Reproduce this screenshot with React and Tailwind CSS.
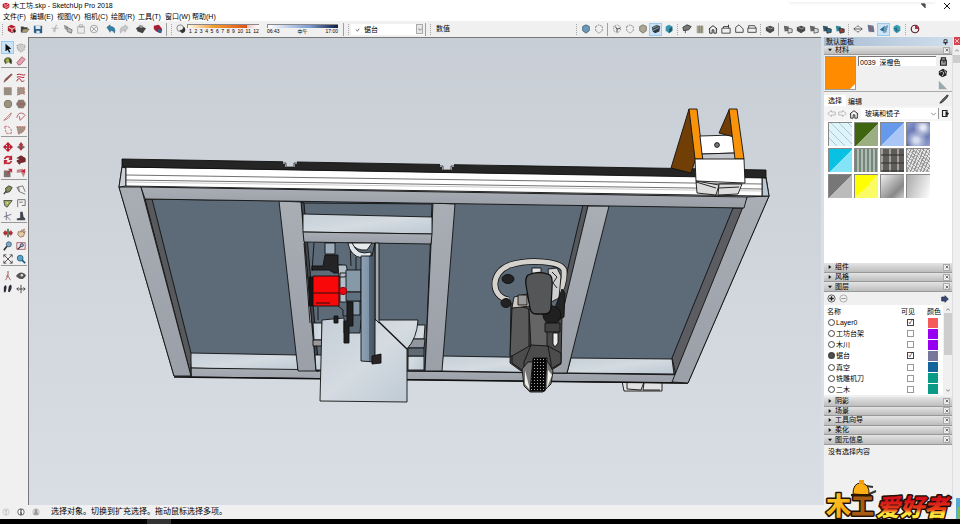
import React from "react";

const INK = "#333333";

/* Small 12x12 tool glyphs, keyed by tool name */
const GLYPHS = {
  logo: <><path d="M1 3l5-2 5 2v5l-4 3-6-3z" fill="#c81e2c" /><path d="M3 4l3 1 3-2M4 7l3 1 3-2" stroke="#fff" fill="none" /></>,
  fresh: <><path d="M1 3l4-2 5 2v6l-4 2-5-3z" fill="#b0202c" /><path d="M2 4l4 2 4-2M6 6v4" stroke="#fff" fill="none" /><path d="M8 7l3 1-2 3z" fill="#222" /></>,
  open: <><path d="M1 3h3l1 1h4v2H4L2 10H1z" fill="#444" /><path d="M4 6h7l-3 4H2z" fill="#b3a07a" stroke="#444" strokeWidth=".7" /></>,
  save: <><path d="M1 2h10v9H2L1 10z" fill="#2d5f85" /><path d="M3 2h6v4H3zM4 8h4v3H4z" fill="#dce8f2" /></>,
  cut: <path d="M8 1L4 9M2 5h8M6 5v5" stroke="#b5b5b5" fill="none" strokeWidth="1.3" />,
  copy: <><path d="M1 1l5 2v5L2 6z" fill="#999" /><path d="M5 4l6 3-1 4-5-2z" fill="#bbb" stroke="#777" /></>,
  paste: <path d="M2 3h8v8H2zM4 1h4v3H4z" fill="#eee" stroke="#aaa" />,
  cancel: <><circle cx="6" cy="6" r="4.5" fill="none" stroke="#999" /><path d="M3 3l6 6M9 3l-6 6" stroke="#999" /></>,
  undo: <path d="M1 4l4-3v2c5 0 7 3 5 8-1-3-3-3-5-3v2z" fill="#2d7fa8" stroke="#24536c" strokeWidth=".5" />,
  redo: <path d="M11 4L7 1v2c-5 0-7 3-5 8 1-3 3-3 5-3v2z" fill="#c5c9cc" stroke="#999" strokeWidth=".5" />,
  print: <><path d="M0 5l5-3 7 3-4 6-6-2z" fill="#444" /><path d="M4 1l5 1-2 3-3-1z" fill="#999" /></>,
  model: <><path d="M1 2l6-1 4 5-2 5-5-2-3-3z" fill="#a51c35" /><path d="M6 6l5 1-1 4-4-1z" fill="#35618c" /></>,
  shadow: <><circle cx="5" cy="5" r="4" fill="#eee" stroke="#777" /><path d="M4 7c3 1 5-1 5-4 4 3 2 8-2 8z" fill="#333" /></>,
  blueball: <path d="M2 3l4-2 4 2v5l-4 3-4-3z" fill="#6d98b5" stroke="#40657d" />,
  wire: <path d="M2 3l4-2 4 2v5l-4 3-4-3z" fill="none" stroke="#777" strokeDasharray="2 1" />,
  hidden: <><path d="M2 3l4-2 4 2v5l-4 3-4-3z" fill="#eee" stroke="#777" strokeDasharray="1 1" /><path d="M4 3l2 3v4M6 6l4-1" stroke="#333" fill="none" /></>,
  shaded: <path d="M2 3l4-2 4 2v5l-4 3-4-3z" fill="#aaa795" stroke="#777564" />,
  texture: <><path d="M1 4l6-3 4 2-1 6-5 2-3-2z" fill="#2e3a42" /><path d="M2 5l6-3M2 8l8-4" stroke="#a9bdc9" /></>,
  mono: <><path d="M2 3l4-2 4 2v5l-4 3-4-3z" fill="#3896b0" /><path d="M6 6l4-3v5l-4 3z" fill="#255b70" /></>,
  iso: <><path d="M1 4l5-3 5 2-3 4-6 1z" fill="#777" stroke="#333" /><path d="M4 7v4" stroke="#444" /></>,
  topview: <><path d="M2 2h8v9H2z" fill="#a6a690" /><path d="M5 2v9M8 2v9" stroke="#777" /></>,
  home: <path d="M1 6l5-4 5 4M2 5v6h3V7h2v4h3V5" fill="none" stroke="#333" strokeWidth="1.2" />,
  right: <path d="M1 5h10v6H1zM3 5V3h6V1M9 1v4" fill="none" stroke="#333" />,
  back: <path d="M2 10V4l4-3 5 5v4z" fill="none" stroke="#333" />,
  left: <path d="M1 5h10v5H1zM2 5V2h7l2 3" fill="none" stroke="#333" />,
  solid: <><path d="M1 4l5-2 5 2v4l-5 3-5-3z" fill="#4b4b4b" /><path d="M3 4l4 2 3-2" stroke="#aaa" fill="none" /></>,
  solidLight: <><path d="M1 2l6 1v5l-5 1z" fill="#666" /><path d="M6 5l5 1v4l-5 1z" fill="#ddd" stroke="#555" /></>,
  solidBlue: <><path d="M1 2l6 1v5l-5 1z" fill="#315a6b" /><path d="M5 5l6 1v4l-5 1z" fill="#276f91" stroke="#333" /></>,
  solidRed: <><path d="M1 2l6 1v5l-5 1z" fill="#2f8396" /><path d="M5 5l6 1v4l-5 1z" fill="#903e3e" stroke="#333" /></>,
  section: <path d="M1 6h10M3 4L1 6l2 2M9 4l2 2-2 2M4 4l2-2 2 2M4 8l2 2 2-2" fill="none" stroke="#444" />,
  secPlane: <><path d="M2 1l7 1 1 8-7-1z" fill="#58779b" /><path d="M3 4l7 3M5 2v8" stroke="#a15b65" /></>,
  secCut: <><path d="M1 7l6-5v8z" fill="#24689a" /><path d="M6 4l5-3-2 9-4 1z" fill="#729ab9" /></>,
  secFill: <><path d="M2 3l4-2 4 2v5l-4 3-4-3z" fill="#36a0b7" /><path d="M5 4v6M2 5l6 3" stroke="#275967" /></>,
  clock: <><circle cx="6" cy="6" r="4.5" fill="#eee" stroke="#5c1e29" strokeWidth="1.4" /><path d="M6 6V2a4 4 0 014 4z" fill="#bd2740" /></>,
  select: <path d="M3 1l7 6-3 .5L9 11l-2 .5L6 8l-3 2z" fill="#101010" />,
  component: <path d="M1 3l5-2 5 2-1 5-4 3-4-3z" fill="#ccc" stroke="#999" strokeDasharray="2 1" />,
  paint: <><path d="M1 6c1-6 9-6 10 0l-1 4-4-3-3 3z" fill="#55673d" /><path d="M3 5l3-3 2 4-3 3z" fill="#a8ac48" /><path d="M8 4l2 5" stroke="#222" /></>,
  eraser: <path d="M1 8l6-7 4 3-5 6-3 1z" fill="#e8a0b0" stroke="#a66577" />,
  pencil: <path d="M1 11l2-4 7-6 1 1-7 7z" fill="#98584d" stroke="#6d342c" strokeWidth=".6" />,
  freehand: <path d="M1 2c4-2 8 2 10 0M1 5c4-2 7 2 9 0M1 10c1-5 5-3 5-1s3 1 4 0" fill="none" stroke="#b32737" strokeWidth="1.2" />,
  square: <><path d="M1 2h9v9H1z" fill="#948f80" /><path d="M1 2h9v9" fill="none" stroke="#bc8b84" /></>,
  rotrect: <path d="M2 2h8v8l-3-1-5 2z" fill="#a39385" stroke="#b05b56" strokeDasharray="2 1" />,
  circle: <circle cx="6" cy="6" r="4.5" fill="#9b947f" stroke="#756b58" />,
  polygon: <><path d="M3 1h6l3 5-3 5H3L0 6z" fill="#8b7c6f" /><path d="M3 6h6" stroke="#b44" /></>,
  arc: <path d="M1 10C5 9 9 6 10 1M1 10L10 1" fill="none" stroke="#b86b68" />,
  arc2: <path d="M1 7C2 0 8 0 11 4L5 10 4 5" fill="none" stroke="#b14755" />,
  arc3: <path d="M2 2c5-2 9 3 8 8M2 2l2 8h6" fill="none" stroke="#bc5d65" strokeDasharray="3 1" />,
  pie: <path d="M1 2h10c0 5-3 7-8 9z" fill="#a59388" stroke="#b65d5d" strokeDasharray="2 1" />,
  move: <path d="M6 0l3 3-2 2V4v1h1l1-2 3 3-3 3-1-2H7v1l2 1-3 3-3-3 2-1V7H4L3 9 0 6l3-3 1 2h1V4L3 3z" fill="#bc1d32" />,
  pushpull: <><path d="M1 6l5-3 5 3-5 4z" fill="#776b67" /><path d="M6 0l3 4H7v6H5V4H3z" fill="#b72c3b" /></>,
  rotate: <path d="M2 5c1-4 6-4 8-1M10 7c-1 4-6 4-8 1M10 1v4H7M2 11V7h3" fill="none" stroke="#c22638" strokeWidth="2" />,
  follow: <path d="M1 4l5-3 5 3v4l-5 1-2 2-3-4 4-2 4 1" fill="#8a252e" stroke="#4b2828" />,
  scale: <><path d="M1 3h8v8H1z" fill="#80706c" /><path d="M6 1h5v5L9 4 6 7 5 6l3-3z" fill="#c7273c" /></>,
  offset: <><path d="M1 2l7-1 3 5-2 5-3-6-5 1z" fill="#c2868a" /><path d="M6 4l5-3v5z" fill="#c92538" /></>,
  tape: <><path d="M1 11l3-4" stroke="#333" strokeWidth="1.5" /><path d="M3 4l4-3 4 2-3 5-4 1z" fill="#89905c" stroke="#333" /></>,
  dimension: <path d="M1 3l7-2 3 7M3 2l1 6 7 3M1 3l3 5" fill="none" stroke="#666" />,
  protractor: <><path d="M1 3h10L5 11l-3-2z" fill="#a4ae57" stroke="#444" /><circle cx="5" cy="6" r="1" fill="#eee" /></>,
  text: <path d="M2 11V2h9v7H7M4 5h4" fill="none" stroke="#777" strokeWidth="1.2" />,
  axes: <path d="M4 1v10M1 7l9-3M4 6l5 5" fill="none" stroke="#667" />,
  text3d: <path d="M5 1h3l1 6 2 2v2H1V9l4-1z" fill="#414850" />,
  orbit: <><path d="M0 6l3-4v2h2v4H3v2zM12 6L9 2v2H7v4h2v2z" fill="#b32a34" /><path d="M6 1v10" stroke="#3c7551" strokeWidth="2" /></>,
  hand: <path d="M2 8l1-4 2 1 2-3v3l3-4-1 5 2-2-2 6-4 1z" fill="#e3c9a7" stroke="#977457" />,
  zoom: <><path d="M1 11l4-5" stroke="#333" strokeWidth="2" /><circle cx="7" cy="4" r="3" fill="#82aac8" stroke="#345c7a" /></>,
  zoomwin: <><path d="M1 2h10v8H1z" fill="none" stroke="#a24854" /><path d="M2 10l4-4" stroke="#333" strokeWidth="1.5" /><circle cx="7" cy="5" r="2" fill="#9ac" stroke="#446" /></>,
  extents: <path d="M1 1l10 10M11 1L1 11M1 4V1h3M8 11h3V8M8 1h3v3M4 11H1V8" fill="none" stroke="#615555" strokeWidth="1.2" />,
  prev: <><circle cx="5" cy="5" r="3.5" fill="#5ba3ca" stroke="#29617f" /><path d="M7 7l4 4" stroke="#24577c" strokeWidth="2" /></>,
  person: <path d="M6 1v5l-3 5M6 6l3 5M6 4L4 7M5 1h2" fill="none" stroke="#955" />,
  eye: <><path d="M0 6c3-5 8-6 12-1-3 6-8 6-12 1" fill="#555" /><circle cx="7" cy="5" r="1.5" fill="#ddd" /></>,
  feet: <path d="M1 4c2-5 4-2 3 2l-1 4H1zM7 3c3-5 4 0 3 3l-2 4-2-1z" fill="#2b2b35" />,
  compass: <path d="M1 6h10M6 1v10M3 4L1 6l2 2M9 4l2 2-2 2" fill="none" stroke="#333" />,
  lock: <path d="M3 5h7v6H3zM4 5V2h5v3M6 7h2" fill="#999" stroke="#222" strokeWidth="1.3" />,
  globe: <><path d="M1 4l5-3 5 3-1 5-5 2-4-3z" fill="#222" /><path d="M2 5l3-1 2 2-2 4M8 3l2 4" stroke="#ddd" fill="none" /></>,
  corner: <path d="M1 1l10 10H1z" fill="#9aa9ae" />,
  navLeft: <path d="M1 6l5-4v2h5v4H6v2z" fill="#f6f6f6" stroke="#aaa" />,
  navRight: <path d="M11 6L6 2v2H1v4h5v2z" fill="#f6f6f6" stroke="#aaa" />,
  export: <><path d="M2 2h6v8H2z" fill="#eee" stroke="#222" strokeWidth="1.5" /><path d="M6 3l5 3-5 4z" fill="#222" /></>,
  detail: <><path d="M1 3h5V1l5 5-5 5V9H1z" fill="#3a4a78" stroke="#1b2238" /></>,
  picker: <path d="M1 11l2-3 5-5 2-2 1 1-2 3-5 5z" fill="#666" stroke="#222" />,
  plus: <><circle cx="6" cy="6" r="4.8" fill="none" stroke="#333" /><path d="M3 6h6M6 3v6" stroke="#222" strokeWidth="1.8" /></>,
  minus: <><circle cx="6" cy="6" r="4.8" fill="none" stroke="#999" /><path d="M3 6h6" stroke="#999" strokeWidth="1.4" /></>,
  info: <><circle cx="6" cy="6" r="4.8" fill="#fff" stroke="#222" /><path d="M6 5v5M6 2v2" stroke="#111" strokeWidth="1.7" /></>,
  geo: <><circle cx="6" cy="6" r="4.8" fill="#eee" stroke="#bbb" /><path d="M4 4h4M6 3v7" stroke="#aaa" /></>,
  user: <><circle cx="6" cy="6" r="5" fill="#ddd" stroke="#bbb" /><path d="M4 2h4v4l2 4H2l2-4z" fill="#999" /></>,
};

function Glyph({ name, className = "size-[10px]" }) {
  return <svg viewBox="0 0 12 12" aria-hidden="true" className={className}>{GLYPHS[name]}</svg>;
}

function Tool({ name, active }) {
  return (
    <button
      aria-label={name}
      className={active
        ? "flex h-[13px] w-[13px] items-center justify-center border border-[#99c9ef] bg-[#cce4f7]"
        : "flex h-[13px] w-[13px] items-center justify-center"}
    >
      <Glyph name={name} />
    </button>
  );
}

const Tools = ({ names, active }) => (
  <div className="flex">{names.map((n, i) => <Tool key={i} name={n} active={active === n} />)}</div>
);
const Grip = () => <span className="mx-[2px] h-[11px] border-l border-dotted border-[#a5a5a5]" />;
const Bar = () => <span className="mx-[2px] h-[13px] border-l border-[#a0a0a0]" />;

const MENUS = ["文件(F)", "编辑(E)", "视图(V)", "相机(C)", "绘图(R)", "工具(T)", "窗口(W)", "帮助(H)"];

function TitleBar() {
  return (
    <header className="bg-white">
      <div className="flex h-[12px] items-center gap-[2px] pl-[2px]">
        <Glyph name="logo" className="size-[8px]" />
        <h1 className="text-[7px] leading-[10px]">木工坊.skp - SketchUp Pro 2018</h1>
        <div className="mr-[23px] ml-auto h-[2px] w-[146px] self-start bg-white shadow" />
        <div className="-ml-[40px] flex gap-[18px] pr-[10px]">
          <button aria-label="还原"><svg viewBox="0 0 6 6" className="size-[6px]"><path d="M1 1h4v4M2 2h2v2" stroke="#111" fill="none" /></svg></button>
          <button aria-label="关闭"><svg viewBox="0 0 6 6" className="size-[6px]"><path d="M0 0l6 6M6 0L0 6" stroke="#111" fill="none" /></svg></button>
        </div>
      </div>
      <nav className="flex h-[9px] items-center pl-[3px]">
        {MENUS.map((m) => <button key={m} className="w-[27px] text-left text-[7px] leading-[8px] whitespace-nowrap">{m}</button>)}
      </nav>
    </header>
  );
}

function Toolbar() {
  return (
    <div className="flex h-[16px] items-center overflow-hidden bg-[#f0f0f0]">
      <Grip />
      <div className="flex gap-[4px]">
        <Tools names={["fresh", "open", "save"]} />
        <Tools names={["cut", "copy", "paste", "cancel"]} />
        <Tools names={["undo", "redo"]} />
        <Tools names={["print"]} />
        <Tools names={["model"]} />
      </div>
      <Bar /><Grip />
      <Tools names={["shadow"]} />
      <div className="w-[72px] text-[5px] leading-[6px]">
        <div className="h-[4px] border-t border-l border-[#888] bg-linear-to-r from-[#fff8e8] via-[#f0a030] via-35% to-[#d82818]">
          <div className="ml-auto h-full w-[12px] bg-linear-to-r from-[#f0c0c0] to-white" />
        </div>
        <div className="flex justify-between pl-[2px]">{["1", "2", "3", "4", "5", "6", "7", "8", "9", "10", "11", "12"].map((n) => <span key={n}>{n}</span>)}</div>
      </div>
      <div className="ml-[8px] w-[71px] text-[5px] leading-[6px]">
        <div className="h-[4px] border-t border-l border-[#888] bg-linear-to-r from-white via-[#7d9bcf] via-60% to-[#111d44]" />
        <div className="flex justify-between"><span>06:43</span><span>中午</span><span>17:00</span></div>
      </div>
      <span className="ml-[3px]" /><Bar /><Grip />
      <label className="flex h-[11px] w-[72px] items-center bg-white pl-[4px]">
        <svg viewBox="0 0 6 6" className="size-[5px]"><path d="M1 3l2 2 2-3" fill="none" stroke="#555" /></svg>
        <select aria-label="图层" className="ml-[4px] min-w-0 flex-1 appearance-none bg-transparent text-[7px] leading-[9px]"><option>锯台</option></select>
        <span className="flex h-[10px] w-[7px] items-center justify-center border border-[#aaa] bg-[#e7e7e7]"><svg viewBox="0 0 6 6" className="size-[4px]"><path d="M0 2l3 3 3-3" fill="none" stroke="#555" /></svg></span>
      </label>
      <Bar /><Grip />
      <span className="w-[141px] pl-[3px] text-[7px] leading-[10px]">数值</span>
      <Grip />
      <Tools names={["blueball", "wire"]} />
      <Bar />
      <Tools names={["hidden", "wire", "shaded", "texture", "mono"]} active="texture" />
      <Grip />
      <Tools names={["iso", "topview", "home", "right", "back", "left"]} />
      <Grip />
      <Tools names={["solid"]} />
      <Bar />
      <Tools names={["solidLight", "solid", "solidLight", "solidBlue", "solidRed"]} />
      <Grip />
      <Tools names={["section", "secPlane", "secCut", "secFill"]} active="secCut" />
      <Grip />
      <Tools names={["clock"]} />
    </div>
  );
}

const PALETTE = [
  ["select", "component", "paint", "eraser"],
  ["pencil", "freehand", "square", "rotrect", "circle", "polygon", "arc", "arc2", "arc3", "pie"],
  ["move", "pushpull", "rotate", "follow", "scale", "offset"],
  ["tape", "dimension", "protractor", "text", "axes", "text3d"],
  ["orbit", "hand", "zoom", "zoomwin", "extents", "prev"],
  ["person", "eye", "feet", "compass"],
];

function Palette() {
  return (
    <aside className="w-[28px] shrink-0 bg-[#f0f0f0] pl-[1px]">
      {PALETTE.map((group, i) => (
        <div key={i} className={i ? "grid w-[26px] grid-cols-2 border-t border-[#999] pt-[3px]" : "grid w-[26px] grid-cols-2 pt-[4px]"}>
          {group.map((n) => <Tool key={n} name={n} active={n === "select"} />)}
        </div>
      ))}
    </aside>
  );
}

/* The workbench model, in window coordinates */
function Viewport() {
  return (
    <main className="min-w-0 flex-1 border-t border-l border-[#777] bg-linear-to-b from-[#c8ced5] to-[#d9dee4]">
      <svg viewBox="29 38 792 467" preserveAspectRatio="xMinYMin slice" className="block h-full w-full" role="img" aria-label="木工台模型">
        <defs>
          <linearGradient id="rail" x1="0" y1="0" x2="0" y2="1"><stop offset="0" stopColor="#a9adb4" /><stop offset="1" stopColor="#9a9fa8" /></linearGradient>
          <linearGradient id="light" x1="0" y1="0" x2="1" y2="1"><stop offset="0" stopColor="#c5ced7" /><stop offset=".5" stopColor="#d4dbe1" /><stop offset="1" stopColor="#bcc8d3" /></linearGradient>
          <linearGradient id="blade" x1="0" y1="0" x2="1" y2="0"><stop offset="0" stopColor="#8fa2b5" /><stop offset=".55" stopColor="#7f93a7" /><stop offset=".6" stopColor="#526373" /><stop offset="1" stopColor="#465462" /></linearGradient>
          <pattern id="knurl" width="3" height="3" patternUnits="userSpaceOnUse"><path d="M0 0h3v3H0z" fill="#080808" /><path d="M0 2h1v1H0z" fill="#aaa" /></pattern>
        </defs>
        <g stroke="#111" strokeWidth=".9" strokeLinejoin="round">
          <path d="M622 381h40v10h-38z" fill="#e2e2e2" /><path d="M627 383v6l14 1 3-8h17M644 383l-1 7h17" fill="none" />
          <path d="M122 167L119 187 174 376 688 383 769 196 766 177z" fill="url(#rail)" />
          <path d="M145 199L745 207 674 375 191 369z" fill="#5d6b78" />
          {/* bottom rail */}
          <path d="M190 353L297 355 298 371 191 368z" fill="url(#light)" />
          <path d="M443 356L562 358 560 373 441 371z" fill="url(#light)" />
          <path d="M571 358L672 359 674 374 567 373z" fill="url(#light)" />
          <path d="M191 368L688 375 685 383 191 377z" fill="url(#rail)" />
          <path d="M174 377L688 383" fill="none" strokeWidth="1.5" />
          {/* side posts */}
          <path d="M145 199L152 199 191 353 191 376z" fill="#57595c" />
          <path d="M119 187L141 187 191 376 174 376z" fill="url(#rail)" />
          <path d="M733 208L743 208 676 375 672 358z" fill="#5b5d62" />
          <path d="M747 197L769 196 688 383 672 382z" fill="url(#rail)" />
          <path d="M583 205L588 206 566 320 558 310z" fill="#55585c" />
          <path d="M588 206L609 206 567 373 548 373z" fill="url(#rail)" />
          {/* saw bay */}
          <path d="M303 203L432 204 425 371 316 371z" fill="#5d6b78" />
          <path d="M301 202L304 203 319 371 316 371z" fill="#42474c" />
          <path d="M279 201L301 202 316 371 298 371z" fill="url(#rail)" />
          <path d="M433 203L455 204 442 371 425 371z" fill="url(#rail)" />
          <path d="M303 214L432 217 432 234 303 232z" fill="url(#light)" />
          <path d="M303 232L432 234 431 244 304 242z" fill="url(#rail)" />
          <path d="M313 323h9v17h-8zM315 355h7v15h-6z" fill="url(#light)" /><path d="M313 340h9v6h-9z" fill="#999" />
          <path d="M417 325h8l-1 14h-14zM408 356h16v14h-16z" fill="url(#light)" /><path d="M410 339h15l-1 9h-17z" fill="#9097a0" /><path d="M408 348h16v8h-16z" fill="#606a74" />
          {/* table plate */}
          <path d="M322 320L344 318 344 333 360 333 361 320 418 320Q417 338 407 349V402L320 401z" fill="url(#light)" />
          <path d="M379 322L407 349" strokeWidth="1.4" />
          {/* motor and mounts */}
          <path d="M325 243h10v11h-10z" fill="#9dadbb" /><path d="M304 243l6 80M314 243l-2 28" fill="none" />
          <path d="M325 255h13v10h4v8h-8l-5-3h-17v-4h11z" fill="#242426" />
          <path d="M338 265h8l2 7-3 5h-6zM340 273h7v29h-7z" fill="#b3c0ca" />
          <path d="M346 270h15v22h-15zM348 301h12v14h-12z" fill="#8699a9" /><path d="M346 292h15v9h-15z" fill="#5f7080" />
          <path d="M350 243l1 23M356 257v13M318 307v13M337 305l6 5v6h4" fill="none" />
          <path d="M309 277h5v29h-5z" fill="#151515" />
          <path d="M313 276h26v30h-26z" fill="#f80808" /><path d="M313 293h26M316 303h14" fill="none" />
          <circle cx="343" cy="291" r="3.7" fill="#e60815" stroke="#800" />
          <path d="M347 302h6v24h-4v17h-5v-22h3zM334 316h4v7h-4z" fill="#202022" />
          <path d="M348 243Q350 256 362 258L371 256V252Q356 256 353 243z" fill="#dfe5e9" /><path d="M352 243Q355 251 367 250L372 243z" fill="#e7eaec" />
          <path d="M375 243L379 243 379 323 375 319z" fill="#a4a9ae" />
          <path d="M361 256H372L375 243V362L361 361z" fill="url(#blade)" />
          <path d="M372 356l9-2v9l-9 1z" fill="#2a2425" />
          {/* apron and track */}
          <path d="M141 187L747 197 744 208 145 199z" fill="url(#rail)" />
          <path d="M122 167L119 187 126 186 126 168z" fill="#cbd1d8" />
          <path d="M762 177L766 178 769 196 762 196z" fill="#bac8d3" />
          <path d="M126 167L762 177 762 196 126 186z" fill="#fff" />
          <path d="M126 175L762 184M126 180L762 189" fill="none" strokeWidth=".6" /><path d="M126 182L762 191" fill="none" stroke="#999" strokeWidth=".5" />
          <path d="M122 159L766 170 766 178 122 167z" fill="#252525" />
          {/* track slots cut into the strip */}
          <g fill="#ccd2d8" stroke="none"><path d="M283 160h14v4h-2v3h-10v-3h-2z" /><path d="M440 163h14v4h-2v3h-10v-3h-2z" /></g>
          <path d="M283 163h3v4h8v-4h3M440 166h3v4h8v-4h3" fill="none" strokeWidth=".7" />
          {/* fence jig */}
          <path d="M689 109L697 155 691 173 671 168z" fill="#713f05" /><path d="M689 109H697L703 159H695z" fill="#fa930c" />
          <path d="M700 136L733 135 735 153 702 154z" fill="#fff" /><path d="M702 154L735 153 736 160H703z" fill="#c4c7cb" />
          <circle cx="717" cy="145" r="2.4" fill="#777" />
          <path d="M729 110L734 137 719 133z" fill="#713f05" /><path d="M729 109H737L744 159H735z" fill="#fa930c" />
          <path d="M695 159H744L745 183 696 181z" fill="#fff" /><path d="M696 181L719 185 716 195 697 193z" fill="#dcdcdc" /><path d="M719 184H742L738 194 718 195z" fill="#dcdcdc" />
          <path d="M696 182l20 6M719 188l20-1" fill="none" />
        </g>
        {/* router */}
        <g stroke="#111" strokeWidth=".9" strokeLinejoin="round">
          <path d="M509 300C490 297 490 272 510 265C529 259 561 261 564 270C565 282 561 291 556 298" fill="none" strokeWidth="6.5" />
          <path d="M509 300C490 297 490 272 510 265C529 259 561 261 564 270C565 282 561 291 556 298" fill="none" stroke="#d5d1cc" strokeWidth="5" />
          <ellipse cx="508" cy="279" rx="6" ry="4.5" fill="#222" /><ellipse cx="506" cy="303" rx="5" ry="4.5" fill="#222" />
          <path d="M548 269l9-1 4 8-2 22-8 4z" fill="#cfcfd0" /><path d="M552 272l5 5-4 6 4 5" fill="none" />
          <path d="M511 304l12-7 25 4 14 16-1 47-11 7h-29l-11-8z" fill="#4b4b4b" />
          <path d="M512 308q8-3 17 1v47l-12 4-7-5z" fill="#5a5a5a" />
          <path d="M514 297l13-3 3 12-18 2z" fill="#cec9c4" /><path d="M518 295h9v10h-9z" fill="#999" />
          <path d="M529 309h18v43l-16-5z" fill="#656565" />
          <path d="M562 289l3 4-1 24-6 3-3-12z" fill="#242426" />
          <circle cx="552" cy="315" r="9" fill="#202020" />
          <path d="M545 323h15v9h-15z" fill="#424242" /><path d="M553 333h5v10l-3 4-2-3z" fill="#eee" />
          <path d="M532 268h9v8h-9z" fill="#e4e4e4" />
          <path d="M528 275q11-5 22 0 3 3 2 13l-1 19q0 7-7 7h-8q-5 0-6-6l-4-23q-1-7 2-10" fill="#555657" strokeWidth="1.3" />
          <path d="M512 356l19-11 17 1 13 7v10l-12 7h-27l-10-7z" fill="#4c4c4c" />
          <path d="M531 345l-7 17v8M548 346l3 17v7" fill="none" />
          <path d="M522 369l6-7h20l5 9-2 13-8 8h-13l-6-6z" fill="#777" />
          <path d="M525 370l5 20-5-6zM548 370l4 5-5 13z" fill="#f1eee7" stroke="none" />
          <path d="M533 358h14l-2 33h-15z" fill="url(#knurl)" />
        </g>
      </svg>
    </main>
  );
}

function SectionHead({ title, open }) {
  return (
    <button className="flex w-full min-h-0 flex-1 items-center border-b border-[#999] bg-linear-to-b from-[#e4e4e4] to-[#bdbdbd] pr-[2px] pl-[4px] text-left">
      <svg viewBox="0 0 6 6" className="size-[4px]"><path d={open ? "M0 1h6L3 5z" : "M1 0l4 3-4 3z"} fill="#111" /></svg>
      <span className="ml-[3px] text-[7px] leading-[8px]">{title}</span>
      <span className="ml-auto flex size-[7px] items-center justify-center border border-[#aaa] bg-[#eee]">
        <svg viewBox="0 0 6 6" className="size-[4px]"><path d="M1 1l4 4M5 1L1 5" stroke={INK} /></svg>
      </span>
    </button>
  );
}

const SWATCHES = [
  "bg-[repeating-linear-gradient(45deg,#dff4fa_0_5px,#a7ccd9_5px_6px)]",
  "bg-[linear-gradient(135deg,#3f6510_50%,#9bae82_50%)]",
  "bg-[linear-gradient(135deg,#6699ec_50%,#a9c6f6_50%)]",
  "bg-[radial-gradient(circle_at_70%_20%,#e3e8f5_0_8%,transparent_40%),radial-gradient(circle_at_40%_75%,#d5dcf0_0_10%,transparent_50%),linear-gradient(135deg,#8f9cd0,#4a5aa0_50%,#97a4cc)]",
  "bg-[linear-gradient(135deg,#09c2e3_50%,#83e4f7_50%)]",
  "bg-[repeating-linear-gradient(90deg,#72867b_0_2px,#b1bbb1_2px_4px)]",
  "bg-[repeating-linear-gradient(0deg,#39393999_0_2px,transparent_2px_8px),repeating-linear-gradient(90deg,#a5a29c_0_2px,#5f5d5a_2px_8px)]",
  "bg-[repeating-linear-gradient(35deg,#88888899_0_1px,transparent_1px_3px),repeating-linear-gradient(115deg,#999_0_1px,#e4e4e4_1px_3px)]",
  "bg-[linear-gradient(135deg,#777_50%,#bbb_50%)]",
  "bg-[linear-gradient(135deg,#ffff00_50%,#fbfb64_50%)]",
  "bg-[linear-gradient(135deg,#eee,#888_70%,#ccc)]",
  "bg-[linear-gradient(110deg,#aaa,#fff)]",
];

const LAYERS = [
  { name: "Layer0", color: "bg-[#f55b5b]", visible: true },
  { name: "工坊台架", color: "bg-[#9800f4]" },
  { name: "木川", color: "bg-[#9800f4]" },
  { name: "锯台", color: "bg-[#77779b]", visible: true, current: true },
  { name: "真空", color: "bg-[#12649b]" },
  { name: "铣雕机刀", color: "bg-[#0b9a85]" },
  { name: "二木", color: "bg-[#0b9a85]" },
];

function Materials() {
  return (
    <section className="flex h-[208px] flex-col">
      <div className="flex h-[37px] gap-[2px] border-b border-[#aaa] p-[1px]">
        <div className="flex size-[34px] items-end justify-end border border-[#999] bg-[#ff8c00]"><svg viewBox="0 0 6 6" className="size-[5px]"><path d="M6 0v6H0z" fill="#fff" /></svg></div>
        <input aria-label="材料名称" defaultValue="0039_深橙色" className="h-[10px] w-[78px] border-t border-l border-[#777] bg-white pl-[1px] text-[7px] leading-[9px]" />
        <div className="ml-auto flex flex-col gap-[2px] pr-[3px]"><Glyph name="lock" /><Glyph name="globe" /><Glyph name="corner" /></div>
      </div>
      <div className="flex h-[14px] items-end gap-[1px] text-[7px] leading-[9px]">
        <button className="h-[11px] w-[22px] bg-white">选择</button><button className="h-[9px] w-[16px]">编辑</button>
        <button aria-label="吸管" className="mr-[3px] ml-auto self-center"><Glyph name="picker" className="block size-[10px]" /></button>
      </div>
      <div className="flex flex-1 flex-col bg-white">
        <div className="flex h-[15px] items-center gap-[2px] bg-[#f5f5f5] pl-[3px]">
          <Glyph name="navLeft" className="size-[9px]" /><Glyph name="navRight" className="size-[9px]" /><Glyph name="home" />
          <label className="flex h-[11px] flex-1 items-center border-r border-[#999] bg-white pl-[4px]">
            <select aria-label="材料库" className="min-w-0 flex-1 appearance-none bg-transparent text-[7px] leading-[9px]"><option>玻璃和镜子</option></select>
            <svg viewBox="0 0 6 6" className="mr-[2px] size-[5px]"><path d="M0 2l3 3 3-3" fill="none" stroke="#777" /></svg>
          </label>
          <Glyph name="export" className="mr-[2px] size-[9px]" />
        </div>
        <div className="grid grid-cols-[repeat(4,24px)] gap-[2px] pt-[1px] pl-[4px]">
          {SWATCHES.map((s, i) => <button key={i} aria-label={`材料 ${i + 1}`} className={`h-[24px] border-t border-l border-[#888] ${s}`} />)}
        </div>
      </div>
    </section>
  );
}

function Layers() {
  return (
    <section>
      <div className="flex h-[13px] items-center gap-[3px] px-[3px]">
        <button aria-label="添加图层"><Glyph name="plus" className="block size-[9px]" /></button>
        <button aria-label="删除图层"><Glyph name="minus" className="block size-[9px]" /></button>
        <button aria-label="详细信息" className="ml-auto"><Glyph name="detail" className="block size-[8px]" /></button>
      </div>
      <div className="flex h-[90px] bg-white">
        <table className="w-full table-fixed border-collapse text-[7px] leading-[9px]">
          <thead><tr className="h-[12px] text-left"><th className="pl-[3px] font-normal">名称</th><th className="w-[26px] font-normal">可见</th><th className="w-[16px] font-normal whitespace-nowrap">颜色</th></tr></thead>
          <tbody>
            {LAYERS.map((l) => (
              <tr key={l.name} className="h-[11px]">
                <td className="p-0 pl-[4px]"><label className="flex items-center gap-[1px]">
                  <input type="radio" name="layer" defaultChecked={l.current} className="size-[7px] appearance-none rounded-full border border-[#444] checked:border-2 checked:bg-[#555]" />{l.name}
                </label></td>
                <td className="p-0 pl-[6px]"><input type="checkbox" aria-label={`${l.name} 可见`} defaultChecked={l.visible} className="flex size-[7px] appearance-none items-center justify-center border border-[#999] checked:border-[#444] checked:after:text-[6px] checked:after:leading-[5px] checked:after:content-['✓']" /></td>
                <td className="p-0 pr-[4px]"><div className={`ml-[1px] h-[10px] w-[10px] ${l.color}`} /></td>
              </tr>
            ))}
          </tbody>
        </table>
        <div className="flex w-[9px] shrink-0 flex-col items-center bg-[#f0f0f0] py-[3px]">
          <svg viewBox="0 0 6 6" className="size-[4px]"><path d="M0 4l3-3 3 3" fill="none" stroke="#444" /></svg>
          <div className="mt-[1px] h-[42px] w-[8px] bg-[#cdcdcd]" />
          <svg viewBox="0 0 6 6" className="mt-auto size-[4px]"><path d="M0 2l3 3 3-3" fill="none" stroke="#444" /></svg>
        </div>
      </div>
    </section>
  );
}

function Tray() {
  return (
    <aside className="flex w-[139px] shrink-0 border-l-[3px] border-[#d6e0e9] bg-[#f0f0f0]">
      <div className="min-w-0 flex-1">
        <h2 className="flex h-[9px] items-center bg-linear-to-r from-[#a9bdd3] to-[#d0deed] pl-[2px] text-[7px] leading-[8px]">默认面板
          <svg viewBox="0 0 6 8" className="mr-[4px] ml-auto h-[6px] w-[5px]"><path d="M1 1h4v4H1zM0 5h6M3 5v3" stroke="#111" fill="none" /></svg>
        </h2>
        <div className="flex h-[9px]"><SectionHead title="材料" open /></div>
        <Materials />
        <div className="flex h-[29px] flex-col"><SectionHead title="组件" /><SectionHead title="风格" /><SectionHead title="图层" open /></div>
        <Layers />
        <div className="h-[2px]" />
        <div className="flex h-[48px] flex-col">
          <SectionHead title="阴影" /><SectionHead title="场景" /><SectionHead title="工具向导" /><SectionHead title="柔化" /><SectionHead title="图元信息" open />
        </div>
        <p className="pt-[2px] pl-[4px] text-[7px] leading-[9px]">没有选择内容</p>
      </div>
      <div className="flex w-[8px] flex-col items-center border-l border-[#ddd] bg-[#f0f0f0]">
        <button aria-label="关闭面板" className="flex h-[8px] w-[6px] items-center justify-center bg-[#d9434e]"><svg viewBox="0 0 6 6" className="size-[4px]"><path d="M0 0l6 6M6 0L0 6" stroke="#fff" /></svg></button>
        <svg viewBox="0 0 6 6" className="mt-[4px] size-[4px]"><path d="M0 4l3-3 3 3" fill="none" stroke="#555" /></svg>
        <div className="mt-[2px] h-[8px] w-[7px] bg-[#cdcdcd]" />
      </div>
    </aside>
  );
}

function Watermark() {
  return (
    <div className="pointer-events-none absolute right-0 bottom-0">
      <svg viewBox="0 0 136 48" className="block h-[48px] w-[136px] font-['Noto_Sans_CJK_SC',sans-serif] font-black">
        <defs>
          <linearGradient id="fire" x1="0" y1="0" x2="0" y2="1"><stop offset=".35" stopColor="#d41018" /><stop offset=".62" stopColor="#e8401a" /><stop offset=".72" stopColor="#ffe63b" /></linearGradient>
          <linearGradient id="wood" x1="0" y1="0" x2="1" y2="1"><stop offset="0" stopColor="#ffd22b" /><stop offset="1" stopColor="#f29f08" /></linearGradient>
        </defs>
        <path d="M132 22h4v21h-4z" fill="#55a8d4" /><path d="M133 31h3v12h-3z" fill="#78bd50" />
        <g stroke="#221006" strokeWidth="3" paintOrder="stroke" strokeLinejoin="round">
          <text x="27" y="38" fontSize="23" fill="#a65a12">工</text>
          <text x="2" y="39" fontSize="25" fill="url(#wood)">木</text>
          <text x="52" y="40" fontSize="24" fontStyle="italic" fill="url(#fire)">爱好者</text>
        </g>
        <path d="M42 10l7 1M41 20l11-5" stroke="#333" strokeWidth="2" />
        <path d="M29 18q0-11 8-11 9 1 8 12z" fill="#ffae13" stroke="#2a1600" /><path d="M35 4h5v4h-5z" fill="#f59b09" /><path d="M27 19h20" stroke="#2a1600" strokeWidth="2" />
      </svg>
    </div>
  );
}

export default function App() {
  return (
    <div lang="zh-CN" className="relative flex h-screen flex-col overflow-hidden bg-[#f0f0f0] font-['Liberation_Sans','Noto_Sans_CJK_SC',sans-serif] text-black">
      <TitleBar />
      <Toolbar />
      <div className="flex min-h-0 flex-1"><Palette /><Viewport /><Tray /></div>
      <footer className="flex h-[14px] items-center gap-[7px] pl-[2px]">
        <Glyph name="geo" className="size-[8px]" /><Glyph name="info" className="size-[8px]" /><Glyph name="user" className="size-[8px]" />
        <p className="pl-[4px] text-[8px] leading-[10px]">选择对象。切换到扩充选择。拖动鼠标选择多项。</p>
      </footer>
      <div className="flex h-[5px] bg-black pl-[147px]"><div className="w-[24px] bg-[#333]" /></div>
      <Watermark />
    </div>
  );
}
